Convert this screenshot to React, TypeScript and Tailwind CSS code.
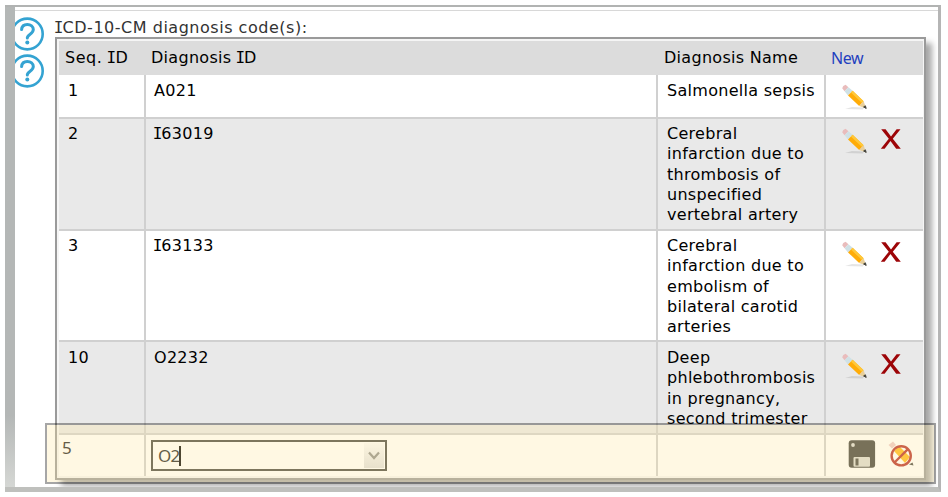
import React from 'react';

interface Diagnosis {
  seq: number;
  code: string;
  name: string[];
  height: string;
  bg: string;
  pad: string;
  iconPad: string;
  removable: boolean;
}

const diagnoses: Diagnosis[] = [
  {
    seq: 1,
    code: 'A021',
    name: ['Salmonella sepsis'],
    height: 'h-[44px]',
    bg: 'bg-white',
    pad: 'pt-[6px]',
    iconPad: 'pt-[9px]',
    removable: false,
  },
  {
    seq: 2,
    code: 'I63019',
    name: ['Cerebral', 'infarction due to', 'thrombosis of', 'unspecified', 'vertebral artery'],
    height: 'h-[112px]',
    bg: 'bg-[#e9e9e9]',
    pad: 'pt-[5px]',
    iconPad: 'pt-[9px]',
    removable: true,
  },
  {
    seq: 3,
    code: 'I63133',
    name: ['Cerebral', 'infarction due to', 'embolism of', 'bilateral carotid', 'arteries'],
    height: 'h-[111px]',
    bg: 'bg-white',
    pad: 'pt-[5px]',
    iconPad: 'pt-[10px]',
    removable: true,
  },
  {
    seq: 10,
    code: 'O2232',
    name: ['Deep', 'phlebothrombosis', 'in pregnancy,', 'second trimester'],
    height: 'h-[93px]',
    bg: 'bg-[#e9e9e9]',
    pad: 'pt-[6px]',
    iconPad: 'pt-[11px]',
    removable: true,
  },
];

// capital I with serifs, the sans face has none
const SerifI = () => <span className="-mx-[1.3px] font-['DejaVu_Sans_Mono',monospace]">I</span>;

const withSerifI = (text: string) =>
  text.split('I').map((part, i) => (
    <React.Fragment key={i}>
      {i > 0 && <SerifI />}
      {part}
    </React.Fragment>
  ));

const HelpIcon = () => (
  <svg width="29" height="34" viewBox="0 0 29 34" fill="none" stroke="#34a3d2" className="block">
    <circle cx="12.3" cy="17" r="15.4" strokeWidth="2.6" />
    <path d="M6.6 12.6c.3-3.3 2.5-5.1 5.7-5.1 3.4 0 6 2.1 6 5.1 0 4.8-6 4.3-6 8.5" strokeWidth="3" strokeLinecap="round" />
    <circle cx="12.3" cy="25.5" r="2" fill="#34a3d2" stroke="none" />
  </svg>
);

const PencilIcon = () => (
  <svg width="28" height="28" viewBox="0 0 28 28" className="block">
    <path d="M4 25 L11 23 L23 23.6 L22 25.4 Z" fill="#000" opacity=".1" />
    <path d="M1.2 4.2 Q1.6 1.4 4.6 .8 L7.4 3.2 L3.6 7.2 Z" fill="#e9bcbc" />
    <path d="M3.6 7.2 L7.4 3.2 L11.6 6.8 L7 11.4 Z" fill="#cfe1e6" />
    <path d="M7 11.4 L11.6 6.8 L22.6 17.2 L18.2 22 Z" fill="#ffac08" />
    <path d="M9.9 8.5 L11.6 6.8 L22.6 17.2 L21 19 Z" fill="#ffc83a" />
    <path d="M18.2 22 L22.6 17.2 L25.2 24.4 Z" fill="#e8cf9b" />
    <path d="M22.6 23 L24.4 21.8 L25.2 24.4 Z" fill="#46463f" stroke="#46463f" />
  </svg>
);

const DeleteIcon = () => (
  <svg width="22" height="22" viewBox="0 0 22 22" fill="#9d0508" className="block">
    <path d="M1.2 1.2h4.4l5.4 7.2 5.6-7.2h3.9l-7.7 9.6 8 9.9h-4.6l-5.7-7.6-5.9 7.6H.8l8-10Z" />
  </svg>
);

const SaveIcon = () => (
  <svg width="28" height="28" viewBox="0 0 28 28" className="block">
    <rect x=".7" y=".3" width="26.4" height="27.4" rx="3" fill="#3e3e3a" />
    <circle cx="5" cy="5" r="1.9" fill="#d8d8d5" />
    <rect x="5.5" y="17" width="16.5" height="9.7" rx="1" fill="#d8d8d2" />
    <rect x="7.5" y="18.5" width="3" height="7" fill="#454540" />
  </svg>
);

const CancelIcon = () => (
  <svg width="28" height="28" viewBox="0 0 28 28" className="block">
    <path d="M.5 5 L5 1.5 L8 5 L4 8.5 Z" fill="#ecc8c8" />
    <path d="M6 11 L11 6 L22 17 L17 23 Z" fill="#ffb818" />
    <path d="M21 24.5 L24.5 22.5 L25.5 25.5 Z" fill="#46463f" />
    <circle cx="13.2" cy="15.8" r="9.6" fill="none" stroke="#b62c25" strokeWidth="2.4" />
    <path d="M6.5 22.5 L19.9 9.1" stroke="#b62c25" strokeWidth="2.4" />
  </svg>
);

const columns = 'grid grid-cols-[85px_512px_168px_99px]';

const DiagnosisRow = ({ item }: { item: Diagnosis }) => (
  <div className={`${columns} ${item.height} ${item.bg} border-b-2 border-[#d0d0d0]`}>
    <div className={`pl-[9px] ${item.pad}`}>{item.seq}</div>
    <div className={`border-l-2 border-[#d0d0d0] pl-2 ${item.pad}`}>{withSerifI(item.code)}</div>
    <div className={`border-l-2 border-[#d0d0d0] pl-[9px] whitespace-nowrap ${item.pad}`}>
      {item.name.map((line) => (
        <div key={line}>{line}</div>
      ))}
    </div>
    <div className={`flex gap-[11px] border-l-2 border-[#d0d0d0] pl-[15px] ${item.iconPad}`}>
      <PencilIcon />
      {item.removable && <DeleteIcon />}
    </div>
  </div>
);

export default function App() {
  return (
    <div className="h-[497px] w-[948px] overflow-hidden bg-white p-[5px] font-['DejaVu_Sans',sans-serif] text-[16px] leading-[20.3px] tracking-[0.29px] text-black">
      <div className="relative flex h-[487px] w-[936px] border-b-[5px] border-r-[3px] border-t-2 border-b-[#bfc0bd] border-r-[#b5b5b5] border-t-[#b1b3b2]">
        <div className="w-[10px] shrink-0 bg-linear-to-b from-[#b4b7b6] from-85% to-[#d5d7d4]" />
        <div className="flex flex-1 flex-col overflow-hidden">
          <div className="mt-[3px] h-px shrink-0 bg-[#d8d8d8]" />
          <div className="flex">
            <div className="w-[40px] shrink-0 space-y-[3px] pt-[6px]">
              <HelpIcon />
              <HelpIcon />
            </div>
            <div className="pt-[6px]">
              <div className="h-[20px] whitespace-nowrap pt-px tracking-[0.52px] text-[#333]">
                {withSerifI('ICD-10-CM diagnosis code(s):')}
              </div>
              <div className="h-[443px] w-[871px] border-2 border-[#9a9a9a] bg-[#f5f5f5] p-[2px] pr-[1px] shadow-[6px_6px_6px_rgba(0,0,0,0.35)]">
                <div className={`${columns} h-[34px] bg-[#dcdcdc] pt-[7px]`}>
                  <div className="pl-[6px] tracking-[0.5px]">{withSerifI('Seq. ID')}</div>
                  <div className="pl-[7px]">{withSerifI('Diagnosis ID')}</div>
                  <div className="pl-2">Diagnosis Name</div>
                  <div className="pl-[7px] font-['Noto_Sans',sans-serif] tracking-[-0.4px] text-[#1f3fbf]">New</div>
                </div>
                {diagnoses.map((item) => (
                  <DiagnosisRow key={item.seq} item={item} />
                ))}
                {/* row being edited */}
                <div className={`${columns} h-[41px] bg-white font-['Noto_Sans',sans-serif] text-[17px] tracking-[-0.8px] text-[#222]`}>
                  <div className="pl-[3px] pt-[3px]">5</div>
                  <div className="border-l-2 border-[#cfcfcf] pl-[5px] pt-[5px]">
                    <div className="flex h-[31px] w-[236px] items-center border-2 border-[#45453f] pl-[5px]">
                      <span className="pt-[1px]">O2</span>
                      <span className="h-[20px] w-[2px] bg-black" />
                      <div className="ml-auto mr-[1px] flex h-[25px] w-[20px] items-center justify-center bg-linear-to-b from-[#fafafa] to-[#dedede]">
                        <svg width="12" height="9" viewBox="0 0 12 9" fill="none" stroke="#8c8c88" strokeWidth="2.2">
                          <path d="M1 1.5 L6 7 L11 1.5" />
                        </svg>
                      </div>
                    </div>
                  </div>
                  <div className="border-l-2 border-[#cfcfcf]" />
                  <div className="flex gap-[12px] border-l-2 border-[#cfcfcf] pl-[22px] pt-[5px]">
                    <SaveIcon />
                    <CancelIcon />
                  </div>
                </div>
              </div>
            </div>
          </div>
        </div>
        {/* translucent highlight laid over the edited row */}
        <div className="absolute left-[40px] top-[416px] h-[61px] w-[891px] border-2 border-black/35 bg-[#ffe8a2]/30 bg-clip-padding" />
      </div>
    </div>
  );
}
